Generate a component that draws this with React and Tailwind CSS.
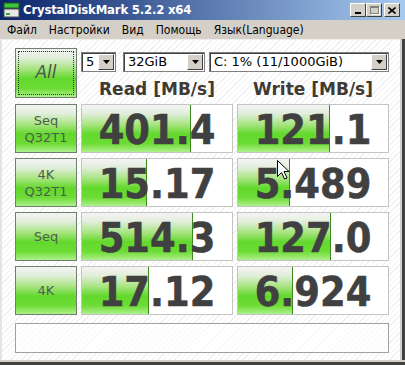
import React from 'react';

const rows = [
  { label: ['Seq', 'Q32T1'], read: '401.4', write: '121.1', rw: 109, ww: 92 },
  { label: ['4K', 'Q32T1'], read: '15.17', write: '5.489', rw: 65, ww: 52 },
  { label: ['Seq'], read: '514.3', write: '127.0', rw: 111, ww: 93 },
  { label: ['4K'], read: '17.12', write: '6.924', rw: 67, ww: 55 },
];

const green =
  'bg-[linear-gradient(to_bottom,#f4f4f4_0%,#e2eedc_18%,#a6e47e_42%,#62d82c_62%,#6ddc36_82%,#aef08a_100%)]';

const Combo = ({ value, w }) => (
  <div className={`${w} h-[20px] flex bg-white border border-[#808080] shadow-[inset_1px_1px_0_#404040]`}>
    <div className="flex-1 pl-[4px] text-[13px] leading-[18px] text-black font-['DejaVu_Sans',sans-serif] whitespace-nowrap overflow-hidden">
      {value}
    </div>
    <div className="w-[16px] h-[16px] m-[1px] bg-[#d4d0c8] border border-t-white border-l-white border-r-[#404040] border-b-[#404040] flex items-center justify-center">
      <svg width="7" height="4" viewBox="0 0 7 4"><path d="M0 0h7L3.5 4z" fill="#000" /></svg>
    </div>
  </div>
);

const Cell = ({ value, fill }) => (
  <div className="relative h-[49px] bg-white border border-[#c4c4c4] overflow-hidden">
    <div className={`absolute left-0 top-0 bottom-0 ${green} border-r border-[#3d8a1c]`} style={{ width: fill }} />
    <div className="relative h-full flex items-center justify-center pt-[4px] text-[41px] font-bold text-[#404040] font-['DejaVu_Sans_Condensed','DejaVu_Sans',sans-serif] [font-stretch:condensed] [-webkit-text-stroke:0.5px_#404040]">
      {value}
    </div>
  </div>
);

const TitleBtn = ({ children }) => (
  <div className="w-[16px] h-[14px] bg-[#d4d0c8] border border-t-white border-l-white border-r-[#404040] border-b-[#404040] flex items-center justify-center">
    {children}
  </div>
);

export default function App() {
  return (
    <div className="w-[405px] h-[365px] flex flex-col bg-[#d4d0c8] font-['DejaVu_Sans',sans-serif] overflow-hidden">
      {/* title bar */}
      <div className="h-[20px] flex items-center bg-[linear-gradient(to_right,#0a246a,#a6caf0)] pl-[3px] pr-[5px]">
        <svg width="17" height="16" viewBox="0 0 17 16">
          <rect x="1" y="1" width="15" height="5" fill="#3cc43c" stroke="#1a5a1a" />
          <rect x="1" y="7" width="15" height="8" fill="#e8e8e8" stroke="#505050" />
          <rect x="3" y="11" width="4" height="2" fill="#30b030" />
        </svg>
        <span className="ml-[3px] text-white font-bold text-[13px] tracking-[-0.2px] font-['DejaVu_Sans_Condensed','DejaVu_Sans',sans-serif]">
          CrystalDiskMark 5.2.2 x64
        </span>
        <div className="ml-auto flex items-center">
          <TitleBtn>
            <div className="w-[6px] h-[2px] bg-black mt-[6px]" />
          </TitleBtn>
          <TitleBtn>
            <div className="w-[9px] h-[8px] border border-[#808080] border-t-2 shadow-[1px_1px_0_#fff]" />
          </TitleBtn>
          <div className="w-[2px]" />
          <TitleBtn>
            <svg width="8" height="7" viewBox="0 0 8 7"><path d="M0.5 0.5L7.5 6.5M7.5 0.5L0.5 6.5" stroke="#000" strokeWidth="1.6" /></svg>
          </TitleBtn>
        </div>
      </div>

      {/* menu bar */}
      <div className="h-[19px] flex items-center gap-[12px] pl-[7px] text-[12px] text-black font-['DejaVu_Sans_Condensed','DejaVu_Sans',sans-serif] [font-stretch:condensed]">
        <span>Файл</span>
        <span>Настройки</span>
        <span>Вид</span>
        <span>Помощь</span>
        <span>Язык(Language)</span>
      </div>

      {/* window body */}
      <div className="flex-1 flex">
        <div className="flex-1 flex flex-col border-t border-[#eeeeee] border-l-2 border-l-[#e4e4e4] bg-white bg-[repeating-linear-gradient(-45deg,#ffffff_0px,#ffffff_3px,#f0f0f0_3px,#f0f0f0_4px)] pl-[13px] pt-[8px]">
          {/* top */}
          <div className="flex">
            <div className={`w-[62px] h-[50px] border border-[#6f7f6f] ${green} p-[2px]`}>
              <div className="w-full h-full border border-dotted border-[#303030] flex items-center justify-center text-[17px] text-[#4a5a4a] italic">
                All
              </div>
            </div>
            <div className="ml-[4px] w-[308px] flex flex-col">
              <div className="flex mt-[4px]">
                <Combo value="5" w="w-[35px]" />
                <div className="w-[7px]" />
                <Combo value="32GiB" w="w-[82px]" />
                <div className="w-[4px]" />
                <Combo value="C: 1% (11/1000GiB)" w="w-[180px]" />
              </div>
              <div className="grid grid-cols-[152px_152px] gap-[4px] mt-[6px] text-[17px] font-bold text-[#403a33] leading-[22px]">
                <div className="text-center">Read [MB/s]</div>
                <div className="text-center">Write [MB/s]</div>
              </div>
            </div>
          </div>

          {/* results */}
          <div className="grid grid-cols-[62px_152px_152px] gap-x-[4px] gap-y-[5px] mt-[4px]">
            {rows.map((r, i) => (
              <React.Fragment key={i}>
                <div className={`h-[49px] border border-[#6f7f6f] ${green} flex flex-col items-center justify-center text-[13px] leading-[17px] text-[#4e5e4e]`}>
                  {r.label.map((l) => (
                    <span key={l}>{l}</span>
                  ))}
                </div>
                <Cell value={r.read} fill={r.rw} />
                <div className="relative">
                  <Cell value={r.write} fill={r.ww} />
                  {i === 1 && (
                    <svg className="absolute left-[40px] top-[2px]" width="12" height="20" viewBox="0 0 12 20">
                      <path d="M0.5 0.5V16.5L4.5 12.5L7.5 19L10 18L7 11.5H12L0.5 0.5Z" fill="#fff" stroke="#000" strokeWidth="1" />
                    </svg>
                  )}
                </div>
              </React.Fragment>
            ))}
          </div>

          <div className="mt-[8px] w-[374px] h-[30px] border border-[#a0a0a0] bg-white/60" />
          <div className="flex-1" />
        </div>
        {/* right frame */}
        <div className="w-[2px] bg-[#d4d0c8]" />
        <div className="w-[3px] bg-[#404040]" />
      </div>
      <div className="h-[2px] bg-[#d4d0c8] mr-[3px]" />
      <div className="h-[3px] bg-[#404040]" />
    </div>
  );
}
